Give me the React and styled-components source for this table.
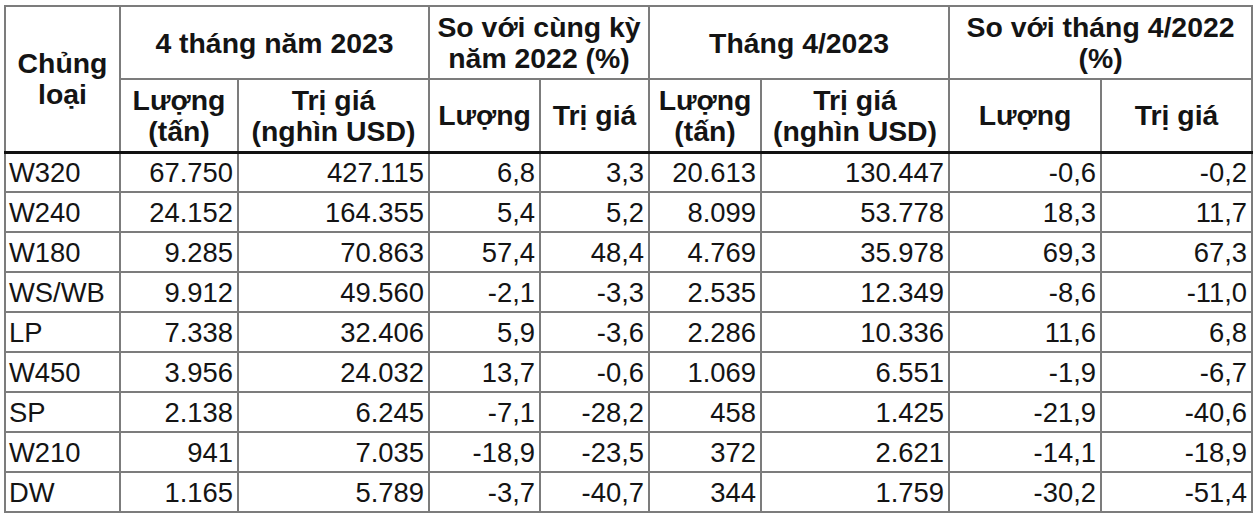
import styled, { createGlobalStyle } from "styled-components";

const GlobalStyle = createGlobalStyle`
  body {
    margin: 0;
    background: #fff;
    font-family: "Liberation Sans", Arial, sans-serif;
  }
`;

const widths = [115, 118, 191, 111, 109, 112, 188, 152, 151];

const rows = [
  ["W320", "67.750", "427.115", "6,8", "3,3", "20.613", "130.447", "-0,6", "-0,2"],
  ["W240", "24.152", "164.355", "5,4", "5,2", "8.099", "53.778", "18,3", "11,7"],
  ["W180", "9.285", "70.863", "57,4", "48,4", "4.769", "35.978", "69,3", "67,3"],
  ["WS/WB", "9.912", "49.560", "-2,1", "-3,3", "2.535", "12.349", "-8,6", "-11,0"],
  ["LP", "7.338", "32.406", "5,9", "-3,6", "2.286", "10.336", "11,6", "6,8"],
  ["W450", "3.956", "24.032", "13,7", "-0,6", "1.069", "6.551", "-1,9", "-6,7"],
  ["SP", "2.138", "6.245", "-7,1", "-28,2", "458", "1.425", "-21,9", "-40,6"],
  ["W210", "941", "7.035", "-18,9", "-23,5", "372", "2.621", "-14,1", "-18,9"],
  ["DW", "1.165", "5.789", "-3,7", "-40,7", "344", "1.759", "-30,2", "-51,4"],
];

const Page = styled.div`
  padding: 5px 0 0 4px;
`;

const Table = styled.table`
  border-collapse: collapse;
  table-layout: fixed;
  width: 1247px;
  color: #141414;
  font-size: 27px;
  border: 2px solid #7c7c7c;
`;

const HeadRow = styled.tr`
  height: 73px;
`;

const Th = styled.th`
  border: 2px solid #7c7c7c;
  border-bottom: ${(p) => (p.$last ? "3px solid #111" : "2px solid #7c7c7c")};
  font-size: 28.4px;
  font-weight: 700;
  line-height: 31px;
  text-align: center;
  vertical-align: middle;
  padding: 1px 0 0;
  white-space: nowrap;
`;

const BodyRow = styled.tr`
  height: 40px;
`;

const Td = styled.td`
  border: 2px solid #7c7c7c;
  border-top: ${(p) => (p.$first ? "3px solid #111" : "2px solid #7c7c7c")};
  text-align: ${(p) => (p.$label ? "left" : "right")};
  padding: ${(p) => (p.$label ? "1px 0 0 3px" : "1px 4px 0 0")};
  font-size: 27.4px;
  line-height: 34px;
  white-space: nowrap;
`;

export default function App() {
  return (
    <>
      <GlobalStyle />
      <Page>
        <Table>
          <colgroup>
            {widths.map((w, i) => (
              <col key={i} style={{ width: w }} />
            ))}
          </colgroup>
          <thead>
            <HeadRow>
              <Th rowSpan={2} $last>
                Chủng
                <br />
                loại
              </Th>
              <Th colSpan={2}>4 tháng năm 2023</Th>
              <Th colSpan={2}>
                So với cùng kỳ
                <br />
                năm 2022 (%)
              </Th>
              <Th colSpan={2}>Tháng 4/2023</Th>
              <Th colSpan={2}>
                So với tháng 4/2022
                <br />
                (%)
              </Th>
            </HeadRow>
            <HeadRow>
              <Th $last>
                Lượng
                <br />
                (tấn)
              </Th>
              <Th $last>
                Trị giá
                <br />
                (nghìn USD)
              </Th>
              <Th $last>Lượng</Th>
              <Th $last>Trị giá</Th>
              <Th $last>
                Lượng
                <br />
                (tấn)
              </Th>
              <Th $last>
                Trị giá
                <br />
                (nghìn USD)
              </Th>
              <Th $last>Lượng</Th>
              <Th $last>Trị giá</Th>
            </HeadRow>
          </thead>
          <tbody>
            {rows.map((r, ri) => (
              <BodyRow key={r[0]}>
                {r.map((c, ci) => (
                  <Td key={ci} $label={ci === 0} $first={ri === 0}>
                    {c}
                  </Td>
                ))}
              </BodyRow>
            ))}
          </tbody>
        </Table>
      </Page>
    </>
  );
}
